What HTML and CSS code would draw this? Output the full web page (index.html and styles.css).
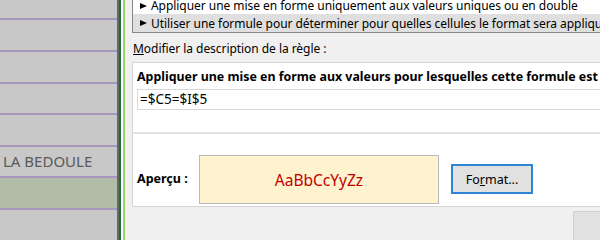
FILE: index.html
```html
<!DOCTYPE html>
<html lang="fr">
<head>
<meta charset="utf-8">
<link rel="stylesheet" href="styles.css">
</head>
<body>
<div class="screen">
  <div class="sheet">
    <div class="cell first"></div>
    <div class="cell"></div>
    <div class="cell"></div>
    <div class="cell short"></div>
    <div class="cell"></div>
    <div class="cell short text">LA BEDOULE</div>
    <div class="cell green"></div>
    <div class="cell"></div>
  </div>
  <div class="edge-dark"></div>
  <div class="edge-green"></div>
  <div class="edge-white"></div>
  <div class="edge-light"></div>
  <div class="dialog">
    <div class="rule-list">
      <div class="rule-item top"><span class="tri"></span>Appliquer une mise en forme uniquement aux valeurs uniques ou en double</div>
      <div class="rule-item selected"><span class="tri"></span>Utiliser une formule pour déterminer pour quelles cellules le format sera appliqué</div>
    </div>
    <div class="label"><u>M</u>odifier la description de la règle :</div>
    <div class="desc">
      <div class="desc-title">Appliquer une mise en forme aux valeurs pour lesquelles cette formule est vraie :</div>
      <div class="formula">=$C5=$I$5</div>
      <div class="spacer"></div>
      <div class="preview-row">
        <span class="preview-label">Aperçu :</span>
        <div class="preview">AaBbCcYyZz</div>
        <button class="btn-format">Fo<u>r</u>mat...</button>
      </div>
    </div>
    <div class="footer">
      <div class="btn-ok"></div>
    </div>
  </div>
</div>
</body>
</html>
```
FILE: styles.css
```css
* { box-sizing: border-box; }
html, body { margin: 0; padding: 0; }
body {
  width: 600px;
  height: 240px;
  overflow: hidden;
  font-family: "Noto Sans", sans-serif;
  font-size: 12px;
  color: #000;
  background: #f0f0f0;
}
.screen {
  display: flex;
  height: 240px;
}
.sheet {
  width: 117px;
  flex: none;
  background: #c8c8c8;
  display: flex;
  flex-direction: column;
  overflow: hidden;
}
.cell {
  height: 32px;
  flex: none;
  border-bottom: 2px solid #a797be;
}
.cell.first { height: 20px; }
.cell.short { height: 31px; }
.cell.text {
  font-size: 15px;
  color: #5a5a5a;
  padding-left: 3px;
  line-height: 29px;
}
.cell.green { background: #b1bda9; }
.edge-dark { width: 2px; flex: none; background: #5f6b63; }
.edge-green { width: 2px; flex: none; background: #1e6b3c; }
.edge-white { width: 2px; flex: none; background: #ffffff; }
.edge-light { width: 2px; flex: none; background: #9ccf6a; }
.dialog {
  flex: 1;
  min-width: 0;
  padding-left: 7px;
  display: flex;
  flex-direction: column;
  overflow: hidden;
  letter-spacing: -0.05px;
}
.rule-list {
  margin-top: -3px;
  border-left: 1px solid #828790;
  border-bottom: 1px solid #828790;
  background: #fff;
}
.rule-item {
  height: 17px;
  line-height: 17px;
  white-space: nowrap;
  padding-left: 7px;
  display: flex;
  align-items: center;
}
.rule-item.selected { background: #dfdfdf; height: 18px; }
.tri {
  width: 0; height: 0;
  border-left: 7px solid #000;
  border-top: 3px solid transparent;
  border-bottom: 3px solid transparent;
  margin-right: 4px;
  flex: none;
}
.label {
  padding-left: 1px;
  margin-top: 7px;
  height: 18px;
  line-height: 18px;
}
.desc {
  margin-top: 4px;
  border: 1px solid #d5d5d5;
  border-right: none;
  background: #fff;
  height: 145px;
  display: flex;
  flex-direction: column;
  padding-left: 4px;
}
.desc-title {
  font-weight: bold;
  font-size: 12.4px;
  letter-spacing: 0;
  white-space: nowrap;
  margin-top: 5px;
  height: 18px;
  line-height: 18px;
}
.formula {
  margin-top: 3px;
  height: 21px;
  border: 1px solid #d9d9d9;
  border-right: none;
  line-height: 19px;
  padding-left: 2px;
  font-size: 13.5px;
  letter-spacing: 0;
}
.spacer {
  height: 24px;
  border-bottom: 2px solid #e2e2e2;
  margin-left: -4px;
}
.preview-row {
  display: flex;
  align-items: flex-start;
  padding-top: 21px;
}
.preview-label {
  font-weight: bold;
  font-size: 12.5px;
  letter-spacing: 0;
  width: 62px;
  margin-top: 15px;
  flex: none;
}
.preview {
  width: 240px;
  height: 49px;
  flex: none;
  background: #fff2cf;
  border: 1px solid #b9b9b9;
  color: #c00000;
  font-size: 15.5px;
  letter-spacing: 0;
  display: flex;
  align-items: center;
  justify-content: center;
}
.btn-format {
  margin-left: 12px;
  margin-top: 9px;
  width: 82px;
  height: 30px;
  background: #e1e1e1;
  border: 2px solid #2f83d6;
  font-family: "Noto Sans", sans-serif;
  font-size: 12.5px;
  color: #000;
  padding: 0;
}
.footer {
  flex: 1;
  display: flex;
  justify-content: flex-end;
  padding-top: 4px;
}
.btn-ok {
  width: 27px;
  background: #e1e1e1;
  border: 1px solid #cfcfcf;
  border-right: none;
  border-bottom: none;
}
```
